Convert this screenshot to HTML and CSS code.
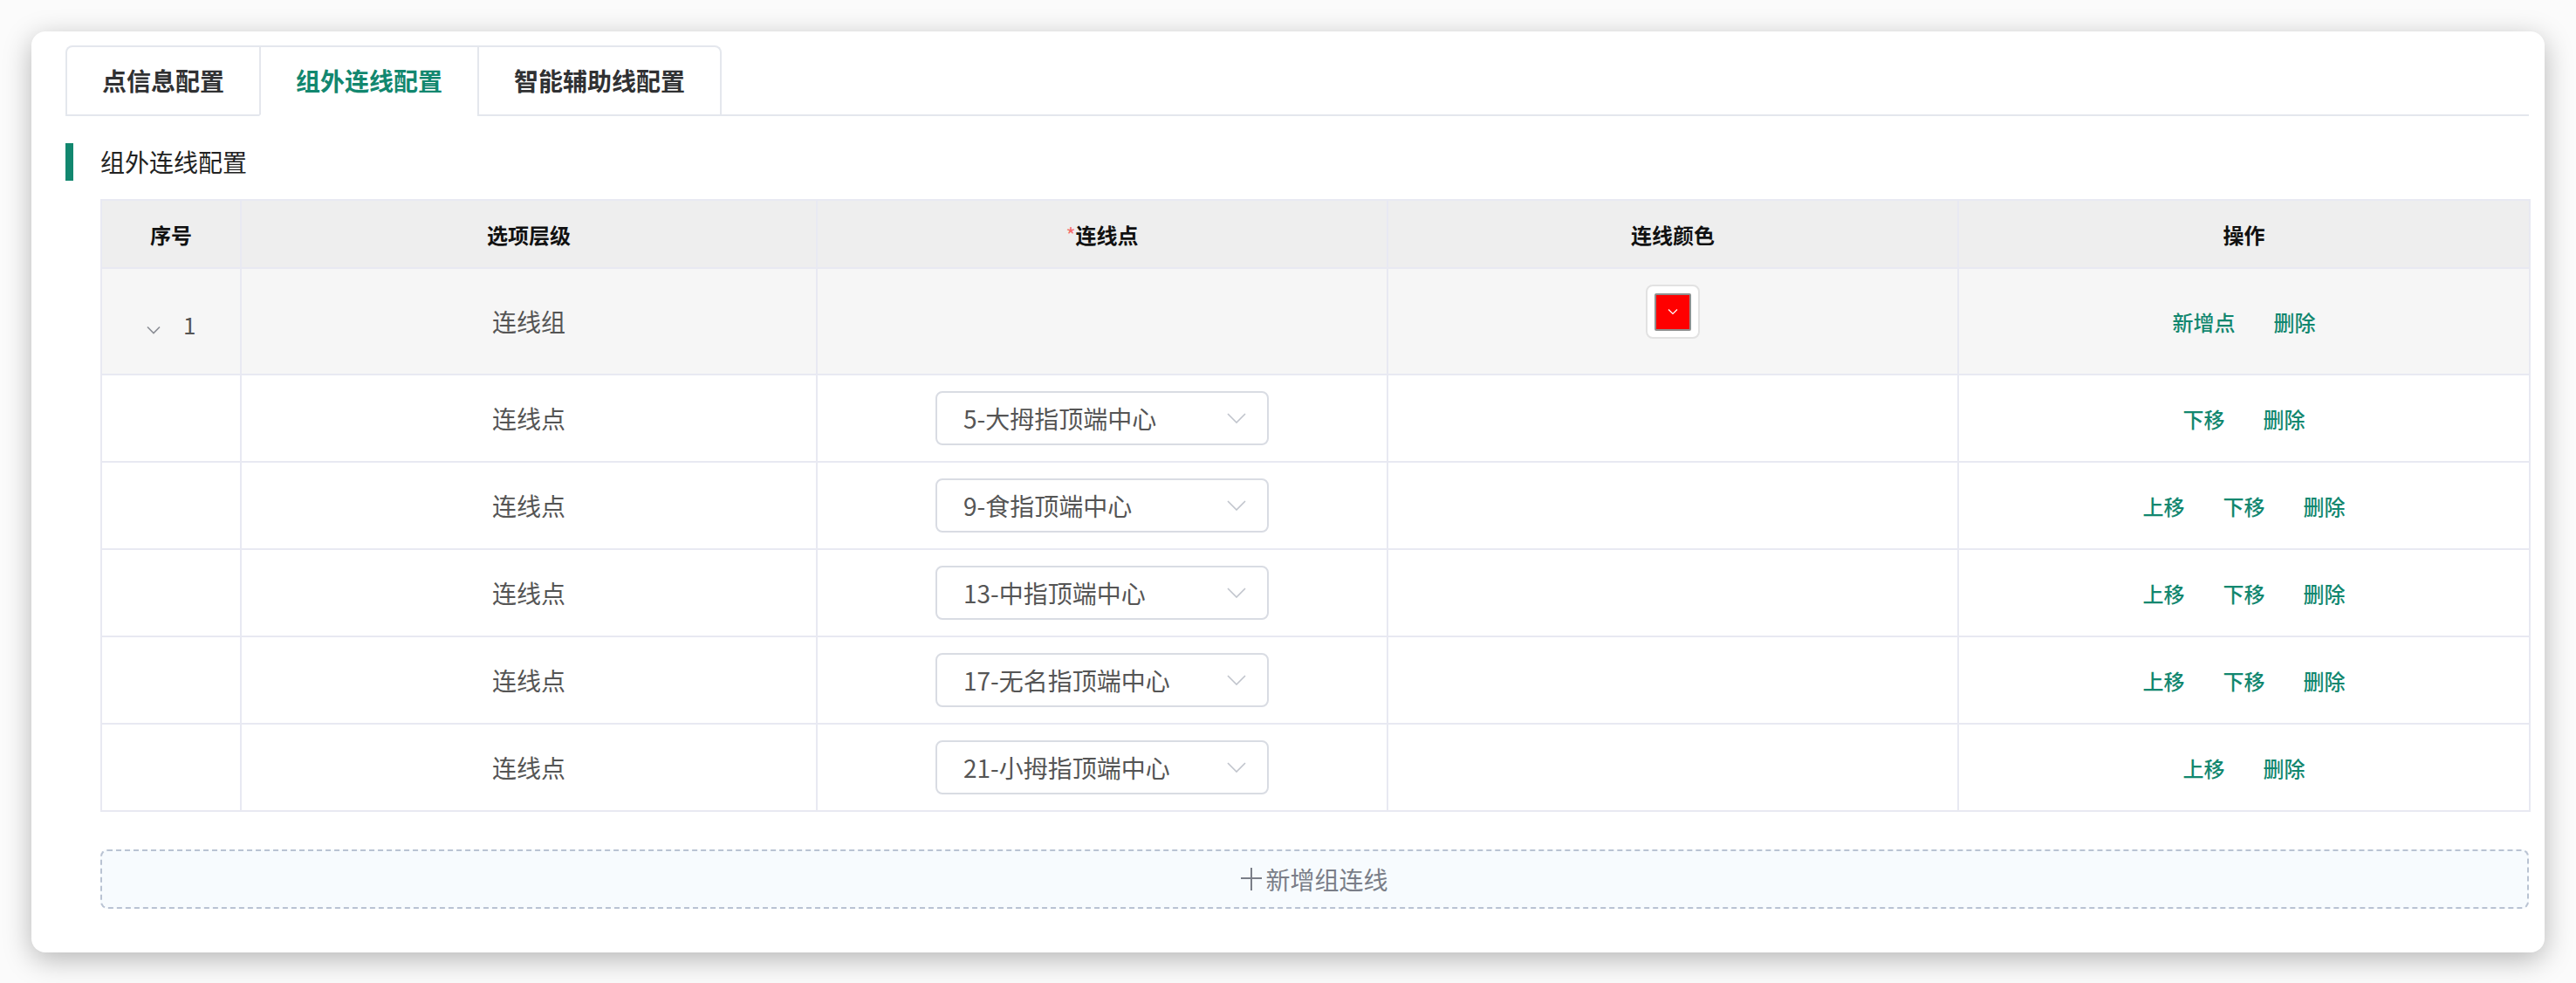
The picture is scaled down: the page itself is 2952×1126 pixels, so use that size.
FILE: index.html
```html
<!DOCTYPE html>
<html lang="zh-CN">

<head>
    <meta charset="UTF-8">
    <title>组外连线配置</title>
    <link rel="stylesheet" href="styles.css">
</head>

<body>
    <div class="card">
        <div class="tabs">
            <div class="tab-list">
                <div class="tab">点信息配置</div>
                <div class="tab active">组外连线配置</div>
                <div class="tab">智能辅助线配置</div>
            </div>
        </div>

        <div class="section-title">组外连线配置</div>

        <div class="section-body">
            <table class="line-table">
                <colgroup>
                    <col style="width: 160px">
                    <col style="width: 660px">
                    <col style="width: 654px">
                    <col style="width: 654px">
                    <col style="width: 655px">
                </colgroup>
                <thead>
                    <tr>
                        <th>序号</th>
                        <th>选项层级</th>
                        <th><span class="required">*</span>连线点</th>
                        <th>连线颜色</th>
                        <th>操作</th>
                    </tr>
                </thead>
                <tbody>
                    <tr class="group-row">
                        <td>
                            <span class="expand">
                                <svg width="16" height="10" viewBox="0 0 16 10"><path d="M1 1.5 L8 8.5 L15 1.5" fill="none" stroke="#8a8d94" stroke-width="1.6"/></svg>
                            </span>
                            <span class="index">1</span>
                        </td>
                        <td>连线组</td>
                        <td></td>
                        <td>
                            <div class="color-picker">
                                <div class="color-swatch">
                                    <svg width="12" height="8" viewBox="0 0 12 8"><path d="M1 1.5 L6 6.5 L11 1.5" fill="none" stroke="#fff" stroke-width="1.2"/></svg>
                                </div>
                            </div>
                        </td>
                        <td>
                            <div class="actions"><a>新增点</a><a>删除</a></div>
                        </td>
                    </tr>
                    <tr>
                        <td></td>
                        <td>连线点</td>
                        <td>
                            <div class="select"><span>5-大拇指顶端中心</span><svg width="22" height="12" viewBox="0 0 22 12"><path d="M1 1 L11 11 L21 1" fill="none" stroke="#c0c4cc" stroke-width="1.6"/></svg></div>
                        </td>
                        <td></td>
                        <td>
                            <div class="actions"><a>下移</a><a>删除</a></div>
                        </td>
                    </tr>
                    <tr>
                        <td></td>
                        <td>连线点</td>
                        <td>
                            <div class="select"><span>9-食指顶端中心</span><svg width="22" height="12" viewBox="0 0 22 12"><path d="M1 1 L11 11 L21 1" fill="none" stroke="#c0c4cc" stroke-width="1.6"/></svg></div>
                        </td>
                        <td></td>
                        <td>
                            <div class="actions"><a>上移</a><a>下移</a><a>删除</a></div>
                        </td>
                    </tr>
                    <tr>
                        <td></td>
                        <td>连线点</td>
                        <td>
                            <div class="select"><span>13-中指顶端中心</span><svg width="22" height="12" viewBox="0 0 22 12"><path d="M1 1 L11 11 L21 1" fill="none" stroke="#c0c4cc" stroke-width="1.6"/></svg></div>
                        </td>
                        <td></td>
                        <td>
                            <div class="actions"><a>上移</a><a>下移</a><a>删除</a></div>
                        </td>
                    </tr>
                    <tr>
                        <td></td>
                        <td>连线点</td>
                        <td>
                            <div class="select"><span>17-无名指顶端中心</span><svg width="22" height="12" viewBox="0 0 22 12"><path d="M1 1 L11 11 L21 1" fill="none" stroke="#c0c4cc" stroke-width="1.6"/></svg></div>
                        </td>
                        <td></td>
                        <td>
                            <div class="actions"><a>上移</a><a>下移</a><a>删除</a></div>
                        </td>
                    </tr>
                    <tr>
                        <td></td>
                        <td>连线点</td>
                        <td>
                            <div class="select"><span>21-小拇指顶端中心</span><svg width="22" height="12" viewBox="0 0 22 12"><path d="M1 1 L11 11 L21 1" fill="none" stroke="#c0c4cc" stroke-width="1.6"/></svg></div>
                        </td>
                        <td></td>
                        <td>
                            <div class="actions"><a>上移</a><a>删除</a></div>
                        </td>
                    </tr>
                </tbody>
            </table>

            <div class="add-btn">
                <svg width="24" height="26" viewBox="0 0 24 26"><path d="M12 0 V26 M0 12 H24" stroke="#7a7e88" stroke-width="2"/></svg>
                <span>新增组连线</span>
            </div>
        </div>
    </div>
</body>

</html>
```

FILE: styles.css
```css
body {
    margin: 0;
    padding: 36px;
    background: #fbfbfb;
    font-family: 'Noto Sans CJK SC', 'Noto Sans', sans-serif;
    color: #333;
}

.card {
    background: #fff;
    border-radius: 16px;
    box-shadow: 0 8px 32px rgba(0, 0, 0, 0.28);
    padding: 16px 18px 50px 39px;
}

/* tabs */
.tabs {
    border-bottom: 2px solid #e4e7ed;
    height: 79px;
}

.tab-list {
    display: inline-flex;
    border: 2px solid #e4e7ed;
    border-bottom: none;
    border-radius: 8px 8px 0 0;
}

.tab {
    height: 77px;
    line-height: 77px;
    padding: 0 40px;
    font-size: 28px;
    font-weight: 600;
    color: #303133;
    border-left: 2px solid #e4e7ed;
    border-bottom: 2px solid #e4e7ed;
}

.tab:first-child {
    border-left: none;
}

.tab.active {
    color: #12876f;
    border-bottom-color: #fff;
}

.section-title {
    margin-top: 31px;
    height: 43px;
    line-height: 43px;
    border-left: 9px solid #12876f;
    padding-left: 31px;
    font-size: 28px;
    color: #222;
}

.section-body {
    margin-top: 21px;
    padding-left: 40px;
}

/* table */
.line-table {
    width: 2783px;
    table-layout: fixed;
    border-collapse: collapse;
    border: 2px solid #e6e8f0;
}

.line-table th,
.line-table td {
    border: 2px solid #e8e9f2;
    text-align: center;
    padding: 0;
}

.line-table tr {
    border-bottom: 2px solid #e4e7ef;
}

.line-table th {
    height: 76px;
    background: #eeeeee;
    font-size: 24px;
    font-weight: 700;
    color: #111;
}

.required {
    color: #f56c6c;
    font-weight: 400;
}

.line-table td {
    height: 98px;
    font-size: 28px;
    color: #555;
}

.group-row td {
    height: 120px;
    background: #f6f6f6;
}

.expand {
    display: inline-block;
    vertical-align: middle;
    margin-right: 20px;
    line-height: 1;
}

.index {
    font-size: 26px;
    vertical-align: middle;
}

.color-picker {
    display: inline-flex;
    align-items: center;
    justify-content: center;
    width: 58px;
    height: 58px;
    border: 2px solid #e2e2e2;
    border-radius: 8px;
    background: #fff;
    margin-bottom: 22px;
    vertical-align: middle;
}

.color-swatch {
    width: 38px;
    height: 39px;
    background: #ff0000;
    border: 2px solid #8f8f8f;
    border-radius: 2px;
    display: flex;
    align-items: center;
    justify-content: center;
}

.actions {
    display: flex;
    justify-content: center;
    gap: 44px;
}

.actions a {
    font-size: 24px;
    font-weight: 500;
    color: #12876f;
    cursor: pointer;
}

.select {
    height: 58px;
    margin: 0 auto;
    border: 2px solid #d9dce3;
    border-radius: 8px;
    display: flex;
    align-items: center;
    justify-content: space-between;
    padding: 0 24px 0 30px;
    box-sizing: content-box;
    width: 324px;
    color: #555;
    font-size: 28px;
    text-align: left;
}

/* add button */
.add-btn {
    margin-top: 43px;
    width: 2779px;
    height: 64px;
    border: 2px dashed #b9c3d3;
    border-radius: 8px;
    background: #f7fbfe;
    display: flex;
    align-items: center;
    justify-content: center;
    gap: 4px;
    font-size: 28px;
    color: #7a7e88;
}
```
